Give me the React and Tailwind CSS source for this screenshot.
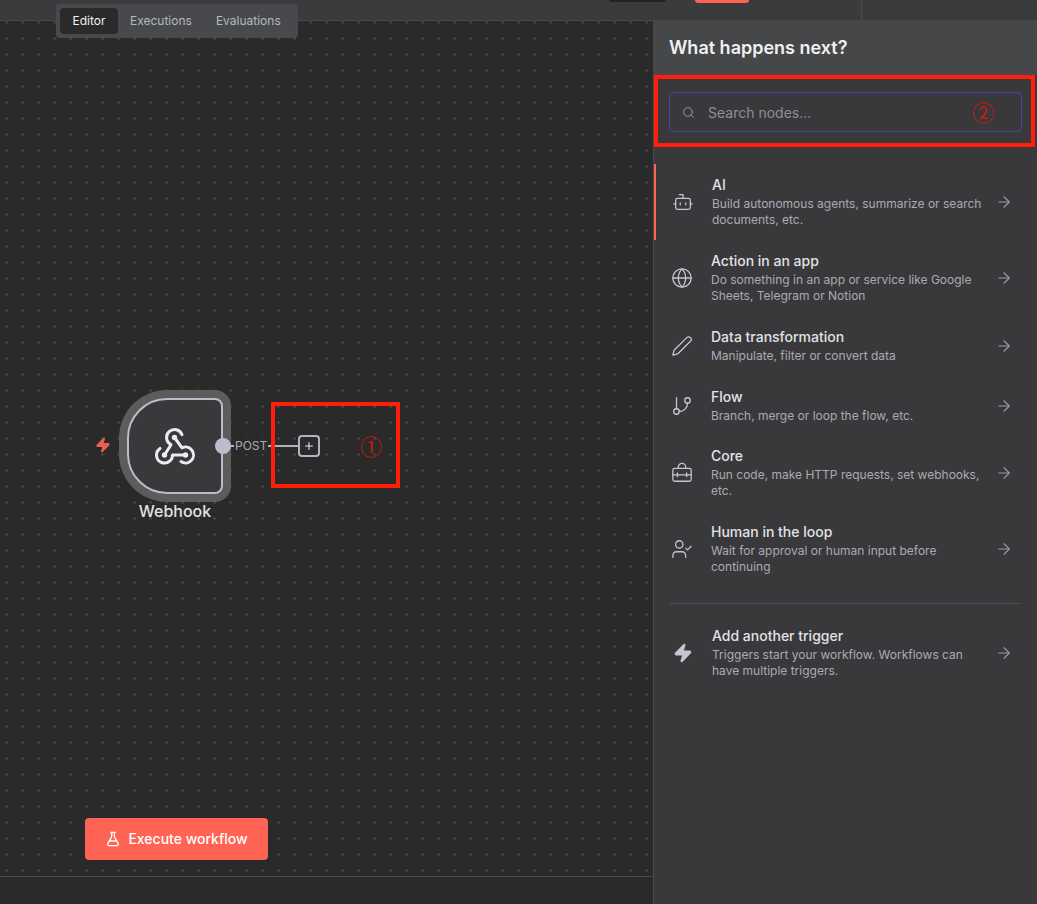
import React from 'react';
import { ArrowRight, Bot, FlaskConical, GitBranch, Globe, Pen, Plus, Search, UserCheck, Zap } from 'lucide-react';

const ToolboxIcon = (props) => (
  <svg viewBox="0 0 24 24" fill="none" stroke="currentColor" strokeWidth="1.5" strokeLinecap="round" strokeLinejoin="round" {...props}>
    <rect x="2" y="7" width="20" height="14" rx="2" />
    <path d="M8 7V5.5a4 4 0 0 1 8 0V7" />
    <path d="M2 14h20" />
    <path d="M7 12v4" />
    <path d="M17 12v4" />
  </svg>
);

const WebhookIcon = (props) => (
  <svg viewBox="0 1 50 46" fill="none" stroke="currentColor" strokeWidth="3" strokeLinecap="round" strokeLinejoin="round" {...props}>
    <path d="M35.5 33H22.5A8 8 0 1 1 10 26.4" />
    <path d="M14.5 33L21 22.7A8 8 0 1 1 32 12.7" />
    <path d="M24.5 15.5L32 25.8A8 8 0 1 1 31 39.6" />
    <circle cx="24.5" cy="15.5" r="1.2" fill="currentColor" />
    <circle cx="14.5" cy="33" r="1.2" fill="currentColor" />
    <circle cx="35.5" cy="33" r="1.2" fill="currentColor" />
  </svg>
);

const TriggerIcon = () => <Zap className="w-5 h-5 text-[#c4c7d0] fill-[#c4c7d0]" />;

const nodes = [
  { title: 'AI', desc: 'Build autonomous agents, summarize or search documents, etc.', Icon: Bot, active: true },
  { title: 'Action in an app', desc: 'Do something in an app or service like Google Sheets, Telegram or Notion', Icon: Globe },
  { title: 'Data transformation', desc: 'Manipulate, filter or convert data', Icon: Pen },
  { title: 'Flow', desc: 'Branch, merge or loop the flow, etc.', Icon: GitBranch },
  { title: 'Core', desc: 'Run code, make HTTP requests, set webhooks, etc.', Icon: ToolboxIcon },
  { title: 'Human in the loop', desc: 'Wait for approval or human input before continuing', Icon: UserCheck },
];

const NodeRow = ({ title, desc, Icon, active, wide }) => (
  <div className={`flex items-center border-l-2 pr-[24px] py-[11.9px] ${active || wide ? 'pl-4' : 'pl-[15px]'} ${active ? 'border-[#ff6353]' : 'border-transparent'}`}>
    <span className="w-[22px] shrink-0 flex justify-center">
      <Icon className="w-[22px] h-[22px] text-[#c4c7d0]" strokeWidth={1.4} />
    </span>
    <div className="flex-1 ml-[18px] mr-[8px]">
      <div className="mb-[2px] text-sm leading-[18px] font-medium text-[#e2e2e6]">{title}</div>
      <div className="text-xs leading-4 text-[#a9abb4]">{desc}</div>
    </div>
    <ArrowRight className="w-[18px] h-[18px] shrink-0 text-[#9a9ca6]" strokeWidth={1.5} />
  </div>
);

const App = () => {
  return (
    <div className="relative w-[1037px] h-[904px] overflow-hidden flex flex-col bg-[#2a2a2a] font-['Inter',sans-serif]">
      <div className="h-5 shrink-0 bg-[#3a3b3d] flex">
        <div className="ml-[609px] w-[57px] h-[2px] bg-[#232323] rounded-b" />
        <div className="ml-[29px] w-[54px] h-[3px] bg-[#ff6353] rounded-b" />
        <div className="ml-[112px] w-px bg-[#4b4c4e]" />
      </div>

      <div className="flex-1 flex min-h-0">
        <div className="relative w-[653px] flex flex-col">
          <div className="flex-1 border-t border-[#4a4a4a] bg-[radial-gradient(circle,#7c7c7c_0.5px,transparent_0.9px)] bg-[size:16px_16px] bg-[position:-1.5px_-6.5px]" />
          <div className="h-[28px] border-t border-[#4a4a4a]" />

          <div className="absolute left-[56px] top-[-16px] w-[242px] h-[34px] flex items-center px-1 bg-[#48494c] rounded text-xs text-[#b4b7c4]">
            <div className="w-[58px] h-[26px] flex items-center justify-center rounded bg-[#2a2a2a] text-[#f0f0f0]">Editor</div>
            <div className="px-3 h-[26px] flex items-center">Executions</div>
            <div className="px-3 h-[26px] flex items-center">Evaluations</div>
          </div>

          <Zap className="absolute left-[95px] top-[417px] w-4 h-4 text-[#ea5f52] fill-[#ea5f52]" />

          <div className="absolute left-[127px] top-[378px] w-[96px] h-[96px] flex items-center justify-center bg-[#39393b] border-2 border-[#b9bdcc] rounded-l-[40px] rounded-r-lg shadow-[0_0_0_8px_#5c5c5c]">
            <WebhookIcon className="w-[50px] h-[46px] text-[#ebecf2]" />
          </div>
          <div className="absolute left-[215px] top-[418px] w-4 h-4 rounded-full bg-[#b9bdcc]" />
          <div className="absolute left-[231px] top-[425px] w-[67px] h-0.5 bg-[#b0b3c0]" />
          <div className="absolute left-[234px] top-[418px] px-px bg-[#2a2a2a] text-xs leading-4 text-[#a9abb6]">POST</div>
          <div className="absolute left-[298px] top-[415px] w-[22px] h-[22px] flex items-center justify-center bg-[#2a2a2a] border-2 border-[#b0b3c0] rounded-[4px]">
            <Plus className="w-3 h-3 text-[#f0f0f0]" />
          </div>
          <div className="absolute left-[125px] top-[481px] w-[100px] text-center text-base leading-5 font-medium text-[#e2e2e6]">Webhook</div>

          <button className="absolute left-[85px] top-[798px] w-[183px] h-[42px] flex items-center justify-center gap-[7px] bg-[#ff6353] rounded text-sm font-medium text-white">
            <FlaskConical className="w-4 h-4" />
            Execute workflow
          </button>
        </div>

        <div className="flex-1 flex flex-col bg-[#39393b] border-l border-[#4a4a4a]">
          <div className="h-[55px] shrink-0 flex items-center px-[15px] bg-[#464749] text-lg font-semibold text-[#f0f0f2]">What happens next?</div>
          <div className="pt-[17px] px-[15px]">
            <div className="h-10 flex items-center border border-[#4f3fa8] rounded pl-3">
              <Search className="w-[13px] h-[13px] text-[#a0a2ac]" strokeWidth={1.6} />
              <span className="ml-[13px] pt-[2px] text-sm text-[#8d8f98]">Search nodes...</span>
            </div>
          </div>
          <div className="mt-[32.3px]">
            {nodes.map((node) => (
              <NodeRow key={node.title} {...node} />
            ))}
          </div>
          <div className="mx-4 mt-[16px] border-t border-[#4e4f52]" />
          <div className="mt-[11px]">
            <NodeRow
              title="Add another trigger"
              desc="Triggers start your workflow. Workflows can have multiple triggers."
              Icon={TriggerIcon}
              wide
            />
          </div>
        </div>
      </div>

      <div className="absolute left-[271px] top-[402px] w-[129px] h-[86px] flex items-center justify-end pr-[14px] border-4 border-[#ff1e0a] text-[22px] text-[#c8190c] font-['Noto_Sans_CJK_JP',sans-serif]">①</div>
      <div className="absolute left-[654px] top-[75px] w-[381px] h-[72px] flex items-center justify-end pr-[37px] border-4 border-[#ff1e0a] text-[22px] text-[#c8190c] font-['Noto_Sans_CJK_JP',sans-serif]">②</div>
    </div>
  );
};

export default App;
